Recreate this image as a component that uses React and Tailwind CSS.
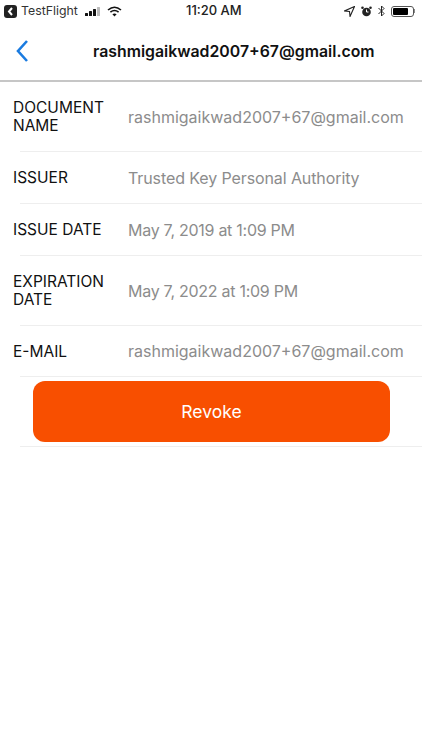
const font = { fontFamily: "Inter, sans-serif" };

const rows = [
  { label: "DOCUMENT NAME", value: "rashmigaikwad2007+67@gmail.com", h: "h-[70px]", track: "tracking-normal" },
  { label: "ISSUER", value: "Trusted Key Personal Authority", h: "h-[52px]", track: "tracking-[-0.1px]" },
  { label: "ISSUE DATE", value: "May 7, 2019 at 1:09 PM", h: "h-[52px]", track: "tracking-[-0.27px]" },
  { label: "EXPIRATION DATE", value: "May 7, 2022 at 1:09 PM", h: "h-[70px]", track: "tracking-[-0.27px]" },
  { label: "E-MAIL", value: "rashmigaikwad2007+67@gmail.com", h: "h-[51px]", track: "tracking-normal" },
];

const StatusBar = () => (
  <div className="flex items-center h-[22px] px-[4px] text-black relative">
    <div className="flex items-center">
      <div className="w-[13px] h-[13px] rounded-[3px] bg-[#222] flex items-center justify-center">
        <svg width="7" height="9" viewBox="0 0 7 9">
          <path d="M5 1 L2 4.5 L5 8" fill="none" stroke="#fff" strokeWidth="2" />
        </svg>
      </div>
      <span className="ml-[4px] w-[56px] text-[12.3px] text-[#333]">TestFlight</span>
      <svg width="17" height="11" viewBox="0 0 17 11" className="ml-[8px]">
        <rect x="0" y="7" width="3" height="3" rx="0.5" fill="#111" />
        <rect x="4" y="5" width="3" height="5" rx="0.5" fill="#111" />
        <rect x="8" y="3" width="3" height="7" rx="0.5" fill="#111" />
        <rect x="12" y="1" width="3" height="9" rx="0.5" fill="#bbb" />
      </svg>
      <svg width="15" height="11" viewBox="0 0 15 11" className="ml-[5px]">
        <path d="M1 4 Q7.5 -1.5 14 4" fill="none" stroke="#111" strokeWidth="1.6" />
        <path d="M3.4 6.2 Q7.5 2.8 11.6 6.2" fill="none" stroke="#111" strokeWidth="1.6" />
        <path d="M5.4 8.2 L7.5 10.5 L9.6 8.2 Q7.5 6.6 5.4 8.2 Z" fill="#111" />
      </svg>
    </div>
    <span className="absolute left-[186px] text-[13px] font-medium text-[#222]">11:20 AM</span>
    <div className="ml-auto flex items-center gap-[6px] pr-[3px]">
      <svg width="11" height="11" viewBox="0 0 10 10">
        <path d="M9.5 0.5 L0.5 4.5 L5 5 L5.5 9.5 Z" fill="none" stroke="#222" strokeWidth="1" />
      </svg>
      <svg width="11" height="11" viewBox="0 0 11 11">
        <circle cx="5.5" cy="6" r="4.3" fill="#222" />
        <path d="M5.5 3.5 V6 H7.5" stroke="#fff" strokeWidth="1" fill="none" />
        <circle cx="1.5" cy="1.8" r="1.3" fill="#222" />
        <circle cx="9.5" cy="1.8" r="1.3" fill="#222" />
      </svg>
      <svg width="7" height="12" viewBox="0 0 7 12">
        <path d="M0.5 3 L6 8.5 L3.5 11 V1 L6 3.5 L0.5 9" fill="none" stroke="#222" strokeWidth="1" />
      </svg>
      <div className="flex items-center">
        <div className="w-[23px] h-[11px] border border-[#555] rounded-[3px] p-[1px]">
          <div className="w-[15px] h-full bg-black rounded-[1px]" />
        </div>
        <div className="w-[1.5px] h-[4px] bg-[#888]" />
      </div>
    </div>
  </div>
);

export default function App() {
  return (
    <div className="w-[422px] h-[750px] bg-white overflow-hidden" style={font}>
      <StatusBar />
      <div className="h-[60px] flex items-center border-b-2 border-[#c6c6c6]">
        <svg width="14" height="24" viewBox="0 0 14 24" className="ml-[15px] mb-[1px]">
          <path d="M12 2 L3 12 L12 22" fill="none" stroke="#1a7be0" strokeWidth="2.6" />
        </svg>
        <div className="ml-[64px] mt-[1px] text-[15.85px] font-semibold text-[#111] whitespace-nowrap">
          rashmigaikwad2007+67@gmail.com
        </div>
      </div>
      <div>
        {rows.map((r) => (
          <div key={r.label} className={`${r.h} ml-[20px] flex items-center border-b border-[#eeeeee]`}>
            <div className="w-[115px] -ml-[7px] mt-[1px] text-[15.5px] leading-[18px] text-[#111] shrink-0">
              {r.label}
            </div>
            <div className={`text-[16px] text-[#8c8c8c] whitespace-nowrap ${r.track}`}>{r.value}</div>
          </div>
        ))}
        <div className="h-[70px] ml-[20px] pl-[13px] pt-[4px] border-b border-[#eeeeee]">
          <button className="w-[357px] h-[61px] pt-[1px] rounded-[12px] bg-[#f84f00] text-white text-[17.5px]">
            Revoke
          </button>
        </div>
      </div>
    </div>
  );
}
